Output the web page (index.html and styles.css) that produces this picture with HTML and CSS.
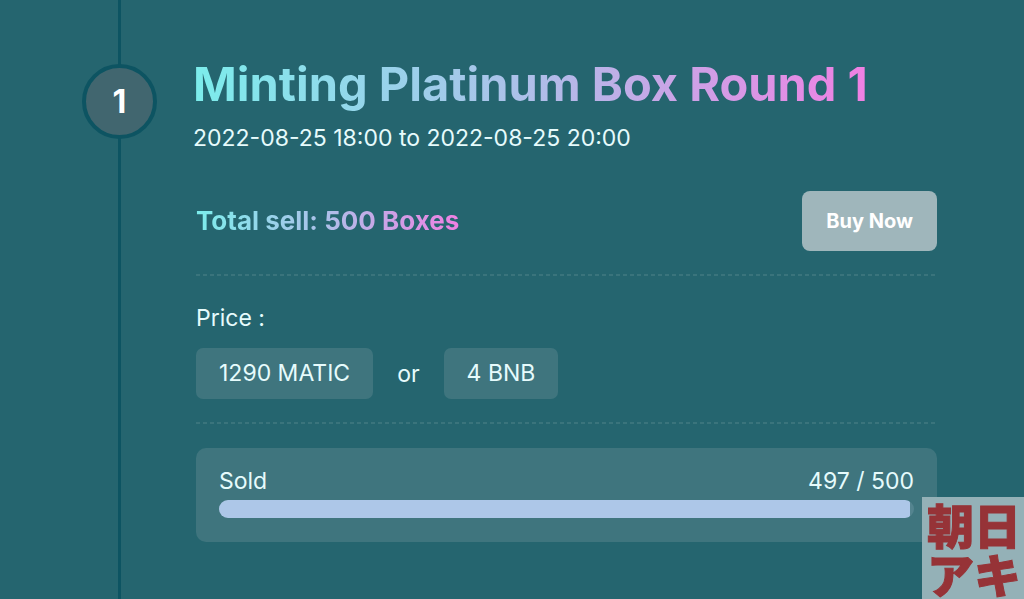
FILE: index.html
```
<!DOCTYPE html>
<html lang="en">
<head>
    <meta charset="UTF-8">
    <meta name="viewport" content="width=device-width, initial-scale=1.0">
    <title>Minting Platinum Box Round 1</title>
    <link rel="stylesheet" href="styles.css">
</head>
<body>
    <main class="timeline">
        <div class="rail">
            <span class="step">1</span>
        </div>

        <section class="round">
            <h1 class="gradient-text">Minting Platinum Box Round 1</h1>
            <p class="dates">2022-08-25 18:00 to 2022-08-25 20:00</p>

            <div class="details">
                <div class="sell-row dashed">
                    <h2 class="gradient-text">Total sell: 500 Boxes</h2>
                    <button type="button" class="buy-button">Buy Now</button>
                </div>

                <!-- Price -->
                <div class="price dashed">
                    <p>Price :</p>
                    <div class="price-options">
                        <span class="chip">1290 MATIC</span>
                        <span>or</span>
                        <span class="chip">4 BNB</span>
                    </div>
                </div>

                <!-- Sold progress -->
                <div class="sold">
                    <div class="sold-info">
                        <label for="soldProgress">Sold</label>
                        <span>497 / 500</span>
                    </div>
                    <progress id="soldProgress" value="497" max="500"></progress>
                </div>
            </div>
        </section>
    </main>

    <div class="watermark" lang="ja">朝日<br>アキ</div>
</body>
</html>
```
FILE: styles.css
```
* {
    box-sizing: border-box;
}

body {
    margin: 0;
    background-color: #25656f;
    color: #e6fbfc;
    font-family: Inter, "Liberation Sans", sans-serif;
    font-size: 23px;
    line-height: 32px;
}

h1, h2, p {
    margin: 0;
}

.timeline {
    display: flex;
    gap: 36px;
    min-height: 100vh;
    padding: 0 87px 0 82px;
}

/* Vertical line running behind the step number */
.rail {
    flex: none;
    width: 75px;
    padding-top: 64px;
    background: linear-gradient(#0d5462, #0d5462) center / 3px 100% no-repeat;
}

.step {
    display: flex;
    align-items: center;
    justify-content: center;
    height: 75px;
    border: 4px solid #0d5462;
    border-radius: 50%;
    background-color: #41666f;
    color: #fff;
    font-size: 32px;
    font-weight: 700;
}

.round {
    flex: 1;
    padding-top: 56px;
}

.gradient-text {
    width: fit-content;
    background: linear-gradient(90deg, #7cedec, #aebfe9 50%, #f080e3);
    -webkit-background-clip: text;
    background-clip: text;
    color: transparent;
}

h1 {
    font-size: 47px;
    font-weight: 700;
    line-height: 56px;
}

.dates {
    margin-top: 10px;
}

.details {
    margin-top: 37px;
    padding-left: 3px;
}

/* Dashed divider along the bottom edge */
.dashed {
    background: repeating-linear-gradient(90deg, #3a747c 0 4px, transparent 4px 7px) bottom / 100% 2px no-repeat;
}

.sell-row {
    display: flex;
    align-items: center;
    justify-content: space-between;
    padding-bottom: 25px;
}

h2 {
    font-size: 26px;
    font-weight: 700;
    line-height: 32px;
}

.buy-button {
    padding: 16px 24px;
    border: none;
    border-radius: 8px;
    background-color: #9fb6bb;
    color: #fff;
    font-family: inherit;
    font-size: 20px;
    font-weight: 700;
    line-height: 28px;
    cursor: pointer;
}

.price {
    padding: 26px 0 25px;
}

.price-options {
    display: flex;
    align-items: center;
    gap: 24px;
    margin-top: 14px;
}

.chip {
    padding: 10px 23px;
    border-radius: 7px;
    background-color: #3f757e;
    line-height: 31px;
}

.sold {
    margin-top: 24px;
    padding: 17px 23px 24px;
    border-radius: 10px;
    background-color: #3f757e;
}

.sold-info {
    display: flex;
    justify-content: space-between;
    margin-bottom: 3px;
}

progress {
    display: block;
    width: 100%;
    height: 18px;
    border: none;
    border-radius: 9px;
    overflow: hidden;
    appearance: none;
    -webkit-appearance: none;
}

progress::-webkit-progress-bar {
    background-color: #54848f;
}

progress::-webkit-progress-value {
    background-color: #adc7e8;
    border-radius: 0 3px 3px 0;
}

.watermark {
    position: fixed;
    right: 0;
    bottom: 0;
    padding: 2px 3px 2px 5px;
    background-color: #94b1b7;
    color: #963337;
    font-family: "Noto Sans CJK JP", sans-serif;
    font-size: 47px;
    font-weight: 900;
    line-height: 49px;
    -webkit-text-stroke: 1px #963337;
}
```
